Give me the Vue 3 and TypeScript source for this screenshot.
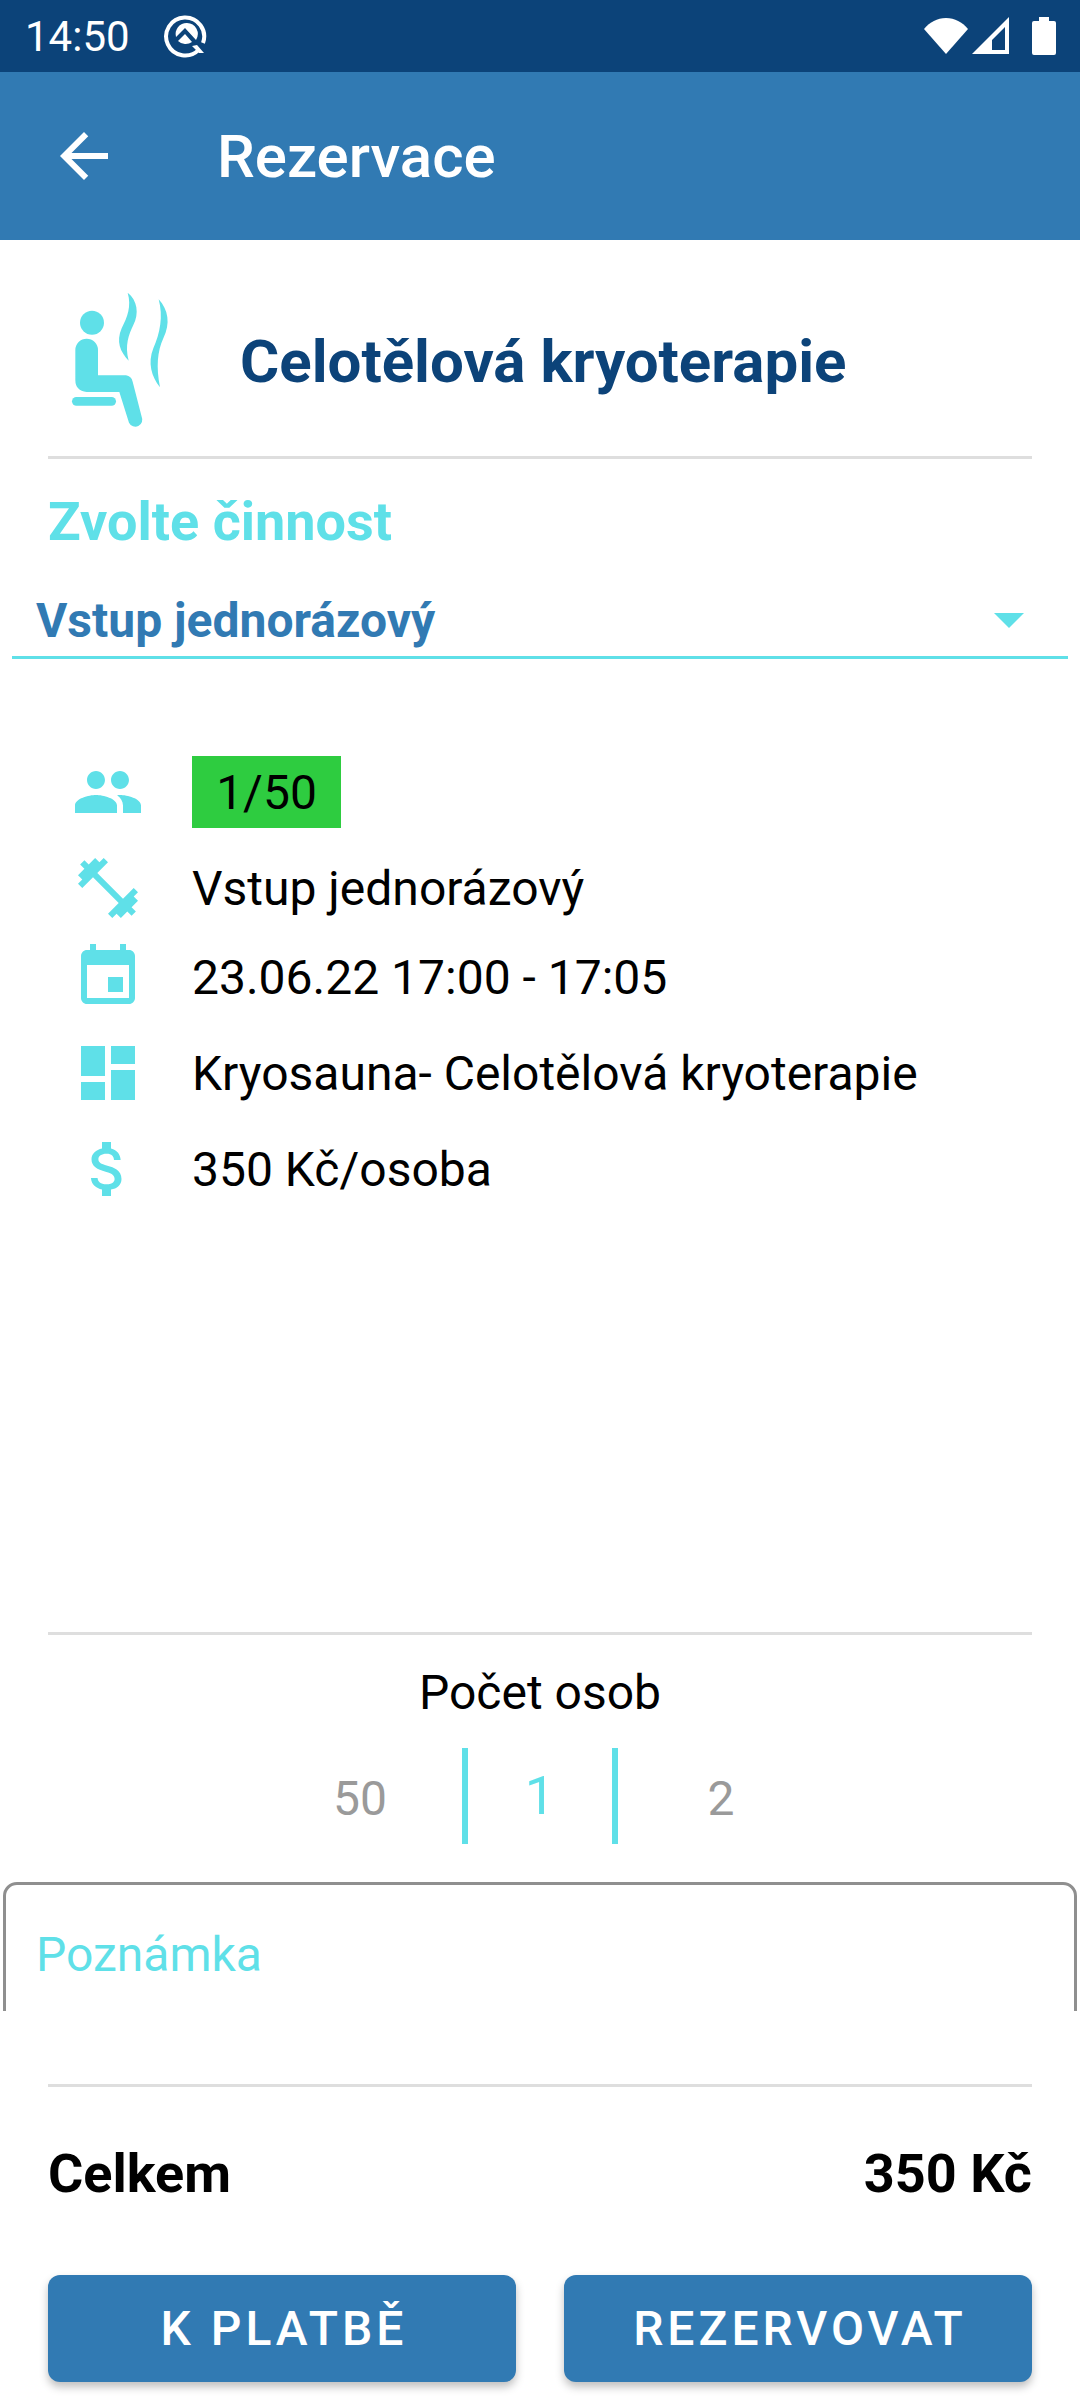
<template>
  <div class="screen">
    <div class="status-bar">
      <span class="clock">14:50</span>
      <svg class="q-logo" viewBox="0 0 48 48">
        <path d="M37 39.5A19 19 0 1 1 41 33" fill="none" stroke="#fff" stroke-width="4" />
        <path d="M30 36l7 7h5l-7-8z" fill="#fff" />
        <path d="M25 13a11 11 0 0 1 9 17L23 18l-9 9a11 11 0 0 1 11-14z" fill="#fff" />
        <path d="M16 31l7-7 7 8a11 11 0 0 1-14-1z" fill="#fff" />
      </svg>
      <div class="status-icons">
        <svg class="wifi" viewBox="0 0 46 38"><path d="M23 37L1 12C7 5 14 1 23 1s16 4 22 11z" fill="#fff" /></svg>
        <svg class="signal" viewBox="0 0 38 38">
          <path fill-rule="evenodd" d="M0 37L37 0v37zM20 33h13V10L20 23z" fill="#fff" />
        </svg>
        <svg class="battery" viewBox="0 0 24 38">
          <path d="M7 0h10v4h5a2 2 0 0 1 2 2v30a2 2 0 0 1-2 2H2a2 2 0 0 1-2-2V6a2 2 0 0 1 2-2h5z" fill="#fff" />
        </svg>
      </div>
    </div>

    <header class="app-bar">
      <svg class="back" viewBox="0 0 24 24"><path d="M20 11H7.83l5.59-5.59L12 4l-8 8 8 8 1.41-1.41L7.83 13H20v-2z" fill="#fff" /></svg>
      <span class="app-title">Rezervace</span>
    </header>

    <section class="hero">
      <svg class="hero-icon" viewBox="0 0 420 510">
        <circle cx="126" cy="158" r="36" />
        <path d="M76 240a34 34 0 0 1 68 0v76h84q16 2 20 19l27 105a20 20 0 0 1-38 18l-29-92H110q-34-4-34-36z" />
        <rect x="66" y="381" width="132" height="26" rx="13" />
        <path d="M233 68c29 22 35 62 17 97-14 30-26 60-14 107-26-27-38-57-21-97 17-35 30-65 18-107z" />
        <path d="M326 88c29 32 36 72 14 117-18 40-22 85-10 147-25-32-38-72-20-117 20-45 30-95 16-147z" />
      </svg>
      <h1 class="hero-title">Celotělová kryoterapie</h1>
    </section>
    <div class="divider" />

    <div class="activity-label">Zvolte činnost</div>
    <div class="spinner">
      <span>Vstup jednorázový</span>
      <i class="caret" />
    </div>

    <div class="info">
      <div v-for="row in rows" :key="row.text" class="info-row" :class="{ tight: row.tight }">
        <svg class="info-icon" viewBox="0 0 24 24"><path :d="row.icon" /></svg>
        <span v-if="row.badge" class="badge">{{ row.text }}</span>
        <span v-else>{{ row.text }}</span>
      </div>
    </div>

    <div class="divider" />
    <div class="people-label">Počet osob</div>
    <div class="picker">
      <span class="cell left">50</span>
      <span class="cell current">1</span>
      <span class="cell right">2</span>
    </div>

    <div class="note-clip">
      <div class="note">Poznámka</div>
    </div>

    <div class="divider" />
    <div class="total">
      <span>Celkem</span>
      <span>350 Kč</span>
    </div>
    <div class="actions">
      <button class="action">K PLATBĚ</button>
      <button class="action">REZERVOVAT</button>
    </div>
  </div>
</template>

<script setup lang="ts">
interface InfoRow {
  icon: string
  text: string
  badge?: boolean
  tight?: boolean
}

const rows: InfoRow[] = [
  {
    icon: 'M16 11c1.66 0 2.99-1.34 2.99-3S17.66 5 16 5c-1.66 0-3 1.34-3 3s1.34 3 3 3zm-8 0c1.66 0 2.99-1.34 2.99-3S9.66 5 8 5C6.34 5 5 6.34 5 8s1.34 3 3 3zm0 2c-2.33 0-7 1.17-7 3.5V19h14v-2.5c0-2.33-4.67-3.5-7-3.5zm8 0c-.29 0-.62.02-.97.05 1.16.84 1.97 1.97 1.97 3.45V19h6v-2.5c0-2.33-4.67-3.5-7-3.5z',
    text: '1/50',
    badge: true,
  },
  {
    icon: 'M20.57 14.86L22 13.43 20.57 12 17 15.57 8.43 7 12 3.43 10.57 2 9.14 3.43 7.71 2 5.57 4.14 4.14 2.71 2.71 4.14l1.43 1.43L2 7.71l1.43 1.43L2 10.57 3.43 12 7 8.43 15.57 17 12 20.57 13.43 22l1.43-1.43L16.29 22l2.14-2.14 1.43 1.43 1.43-1.43-1.43-1.43L22 16.29z',
    text: 'Vstup jednorázový',
  },
  {
    icon: 'M17 12h-5v5h5v-5zM16 1v2H8V1H6v2H5c-1.11 0-1.99.9-1.99 2L3 19c0 1.1.89 2 2 2h14c1.1 0 2-.9 2-2V5c0-1.1-.9-2-2-2h-1V1h-2zm3 18H5V8h14v11z',
    text: '23.06.22 17:00 - 17:05',
    tight: true,
  },
  {
    icon: 'M3 13h8V3H3v10zm0 8h8v-6H3v6zm10 0h8V11h-8v10zm0-18v6h8V3h-8z',
    text: 'Kryosauna- Celotělová kryoterapie',
  },
  {
    icon: 'M11.8 10.9c-2.27-.59-3-1.2-3-2.15 0-1.09 1.01-1.85 2.7-1.85 1.78 0 2.44.85 2.5 2.1h2.21c-.07-1.72-1.12-3.3-3.21-3.81V3h-3v2.16c-1.94.42-3.5 1.68-3.5 3.61 0 2.31 1.91 3.46 4.7 4.13 2.5.6 3 1.48 3 2.41 0 .69-.49 1.79-2.7 1.79-2.06 0-2.87-.92-2.98-2.1h-2.2c.12 2.19 1.76 3.42 3.68 3.83V21h3v-2.15c1.95-.37 3.5-1.5 3.5-3.55 0-2.84-2.43-3.81-4.7-4.4z',
    text: '350 Kč/osoba',
  },
]
</script>

<style>
html,
body {
  margin: 0;
  background: #fff;
}
</style>

<style scoped>
.screen {
  width: 1080px;
  height: 2400px;
  overflow: hidden;
  background: #fff;
  font-family: Roboto, "Noto Sans", sans-serif;
  color: #000;
  display: flex;
  flex-direction: column;
}

.status-bar {
  height: 72px;
  flex: none;
  background: #0c4379;
  color: #fff;
  display: flex;
  align-items: center;
  padding: 0 24px 0 25px;
  box-sizing: border-box;
}

.clock {
  font-size: 42px;
}

.q-logo {
  width: 48px;
  height: 48px;
  margin: -5px 0 0 32px;
}

.status-icons {
  margin-left: auto;
  display: flex;
  align-items: flex-start;
  height: 38px;
}

.wifi {
  width: 46px;
  height: 38px;
}

.signal {
  width: 38px;
  height: 38px;
  margin-left: 3px;
}

.battery {
  width: 24px;
  height: 38px;
  margin-left: 22px;
}

.app-bar {
  height: 168px;
  flex: none;
  background: #317ab3;
  display: flex;
  align-items: center;
  padding-left: 48px;
}

.back {
  width: 72px;
  height: 72px;
}

.app-title {
  margin-left: 97px;
  font-size: 60px;
  font-weight: 500;
  color: #fff;
}

.hero {
  height: 216px;
  flex: none;
  display: flex;
  align-items: center;
  padding-left: 50px;
}

.hero-icon {
  width: 140px;
  height: 170px;
  margin-top: 14px;
  fill: #5fe0e8;
}

.hero-title {
  margin: 26px 0 0 50px;
  font-size: 60px;
  font-weight: 700;
  color: #0c4379;
}

.divider {
  flex: none;
  height: 3px;
  margin: 0 48px;
  background: #dedede;
}

.activity-label {
  margin: 33px 0 0 48px;
  font-size: 54px;
  line-height: 60px;
  font-weight: 700;
  color: #5fe0e8;
}

.spinner {
  margin: 33px 12px 0;
  height: 71px;
  padding: 0 24px;
  border-bottom: 3px solid #5fe0e8;
  display: flex;
  align-items: center;
  justify-content: space-between;
  font-size: 48px;
  font-weight: 700;
  color: #317ab3;
}

.caret {
  width: 0;
  height: 0;
  margin-right: 20px;
  border-left: 15px solid transparent;
  border-right: 15px solid transparent;
  border-top: 15px solid #5fe0e8;
}

.info {
  height: 973px;
  box-sizing: border-box;
  padding: 97px 0 0 72px;
  display: flex;
  flex-direction: column;
  gap: 24px;
  flex: none;
  font-size: 48px;
}

.info-row {
  height: 72px;
  display: flex;
  align-items: center;
  gap: 48px;
}

.info-row.tight {
  margin-top: -7px;
}

.info-icon {
  width: 72px;
  height: 72px;
  fill: #5fe0e8;
}

.badge {
  width: 149px;
  height: 72px;
  background: #2ecc40;
  display: flex;
  align-items: center;
  justify-content: center;
}

.people-label {
  margin-top: 30px;
  text-align: center;
  font-size: 48px;
  line-height: 56px;
}

.picker {
  margin-top: 27px;
  height: 96px;
  display: flex;
  justify-content: center;
  font-size: 48px;
  color: #9a9a9a;
}

.cell {
  width: 192px;
  display: flex;
  align-items: center;
  justify-content: center;
  box-sizing: border-box;
  padding-top: 5px;
}

.cell.left {
  padding-right: 12px;
}

.cell.right {
  padding-left: 14px;
}

.cell.current {
  width: 156px;
  border-left: 6px solid #5fe0e8;
  border-right: 6px solid #5fe0e8;
  color: #5fe0e8;
  font-size: 54px;
  padding-top: 0;
  padding-bottom: 2px;
}

.note-clip {
  margin-top: 38px;
  height: 129px;
  padding: 0 3px;
  overflow: hidden;
  flex: none;
}

.note {
  height: 220px;
  box-sizing: border-box;
  border: 3px solid #8f8f8f;
  border-radius: 14px;
  padding: 42px 0 0 30px;
  font-size: 48px;
  line-height: 56px;
  color: #5fe0e8;
}

.note-clip + .divider {
  margin-top: 73px;
}

.total {
  margin: 55px 48px 0;
  display: flex;
  justify-content: space-between;
  font-size: 54px;
  line-height: 64px;
  font-weight: 700;
}

.actions {
  margin: 69px 48px 0;
  display: flex;
  gap: 48px;
}

.action {
  flex: 1;
  height: 107px;
  border: 0;
  padding: 0 0 0 4px;
  border-radius: 12px;
  background: #317ab3;
  box-shadow: 0 5px 8px rgba(0, 0, 0, 0.25);
  color: #fff;
  font-family: inherit;
  font-size: 48px;
  font-weight: 500;
  letter-spacing: 4px;
}
</style>
